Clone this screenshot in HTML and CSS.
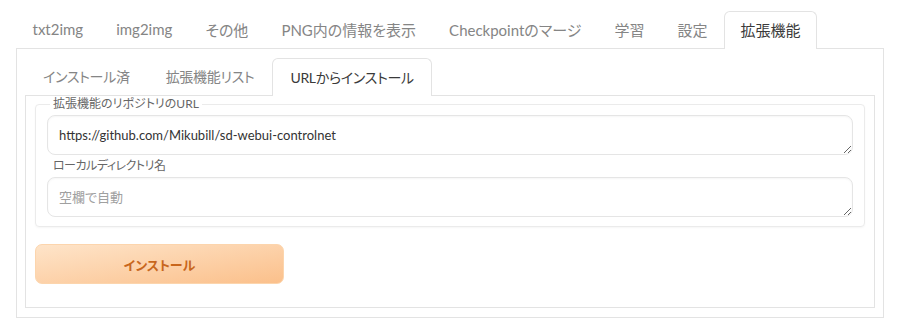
FILE: index.html
```html
<!DOCTYPE html>
<html lang="ja">
<head>
    <meta charset="UTF-8">
    <meta name="viewport" content="width=device-width, initial-scale=1.0">
    <title>拡張機能</title>
    <link rel="stylesheet" href="styles.css">
</head>
<body>
    <div class="tabs main-tabs">
        <div class="tab-nav">
            <button class="tab">txt2img</button>
            <button class="tab">img2img</button>
            <button class="tab">その他</button>
            <button class="tab">PNG内の情報を表示</button>
            <button class="tab">Checkpointのマージ</button>
            <button class="tab">学習</button>
            <button class="tab">設定</button>
            <button class="tab selected">拡張機能</button>
        </div>
        <div class="tab-panel">
            <div class="tabs sub-tabs">
                <div class="tab-nav">
                    <button class="tab">インストール済</button>
                    <button class="tab">拡張機能リスト</button>
                    <button class="tab selected">URLからインストール</button>
                </div>
                <div class="tab-panel inner">
                    <fieldset class="group">
                        <legend>拡張機能のリポジトリのURL</legend>
                        <textarea class="field" rows="1">https://github.com/Mikubill/sd-webui-controlnet</textarea>
                        <label class="field-label">ローカルディレクトリ名</label>
                        <textarea class="field" rows="1" placeholder="空欄で自動"></textarea>
                    </fieldset>
                    <button class="primary">インストール</button>
                </div>
            </div>
        </div>
    </div>
</body>
</html>
```

FILE: styles.css
```css
:root {
    --border-color: #e3e3e3;
    --text-color: #374151;
    --muted-color: #858585;
}

body {
    font-family: Lato, "Noto Sans CJK JP", sans-serif;
    font-feature-settings: "palt";
    margin: 0;
    padding: 11px 16px 0;
    background-color: white;
    color: var(--text-color);
}

.tab-nav {
    display: flex;
}

.tab {
    position: relative;
    height: 37px;
    padding: 0 15.5px 2px;
    border: 1px solid transparent;
    border-bottom: none;
    border-radius: 6px 6px 0 0;
    background: none;
    font-family: inherit;
    font-feature-settings: inherit;
    font-size: 15px;
    color: var(--muted-color);
    cursor: pointer;
}

.tab.selected {
    height: 38px;
    margin-bottom: -1px;
    border-color: var(--border-color);
    background-color: white;
    color: #3a3a3a;
    z-index: 1;
}

.sub-tabs .tab {
    padding: 0 17px 2px;
    font-size: 14px;
    letter-spacing: -0.3px;
}

.tab-panel {
    border: 1px solid var(--border-color);
    padding: 9px 8px;
}

.tab-panel.inner {
    padding: 0 9px 23px;
}

.group {
    margin: 0;
    padding: 0 11px 9px;
    border: 1px solid #ebebeb;
    border-radius: 4px;
    box-shadow: 0 1px 2px rgba(0, 0, 0, 0.04);
}

.group legend {
    margin-left: 3px;
    padding: 0 3px;
    font-size: 12px;
    line-height: 16px;
    color: #666;
}

.field {
    display: block;
    box-sizing: border-box;
    width: 100%;
    height: 40px;
    margin-top: 3px;
    padding: 10px 11px;
    border: 1px solid #e5e5e5;
    border-radius: 8px;
    box-shadow: inset 0 1px 2px rgba(0, 0, 0, 0.04);
    font-family: inherit;
    font-feature-settings: inherit;
    font-size: 13px;
    line-height: 18px;
    color: #333;
    resize: vertical;
}

.field::placeholder {
    color: #a0a0a0;
}

.field-label {
    display: block;
    margin: 3px 0 2px 6px;
    font-size: 12px;
    line-height: 16px;
    letter-spacing: -0.5px;
    color: #666;
}

.primary {
    display: block;
    width: 249px;
    height: 40px;
    margin-top: 17px;
    border: 1px solid #fcd5ad;
    border-radius: 7px;
    background: linear-gradient(to bottom right, #fee4c9, #fbc08b);
    font-family: inherit;
    font-feature-settings: inherit;
    font-size: 13px;
    font-weight: 600;
    color: #c8661c;
    cursor: pointer;
}
```
